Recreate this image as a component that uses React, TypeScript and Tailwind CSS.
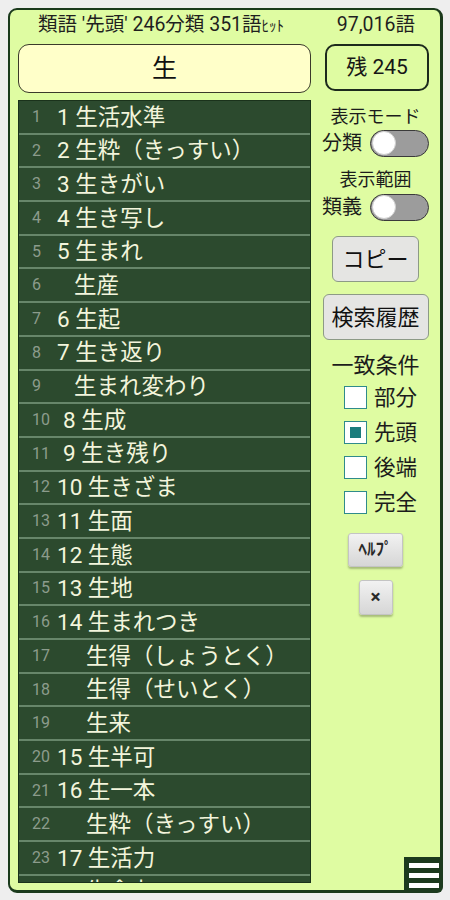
import React from "react";

type Row = { idx: number; text: string; indent: string };

// indent classes are written out so tailwind picks them up
const A = "ml-0";
const B = "ml-[17px]";
const C = "ml-[6px]";
const D = "ml-[29px]";

const rows: Row[] = [
  { idx: 1, text: "1 生活水準", indent: A },
  { idx: 2, text: "2 生粋（きっすい）", indent: A },
  { idx: 3, text: "3 生きがい", indent: A },
  { idx: 4, text: "4 生き写し", indent: A },
  { idx: 5, text: "5 生まれ", indent: A },
  { idx: 6, text: "生産", indent: B },
  { idx: 7, text: "6 生起", indent: A },
  { idx: 8, text: "7 生き返り", indent: A },
  { idx: 9, text: "生まれ変わり", indent: B },
  { idx: 10, text: "8 生成", indent: C },
  { idx: 11, text: "9 生き残り", indent: C },
  { idx: 12, text: "10 生きざま", indent: A },
  { idx: 13, text: "11 生面", indent: A },
  { idx: 14, text: "12 生態", indent: A },
  { idx: 15, text: "13 生地", indent: A },
  { idx: 16, text: "14 生まれつき", indent: A },
  { idx: 17, text: "生得（しょうとく）", indent: D },
  { idx: 18, text: "生得（せいとく）", indent: D },
  { idx: 19, text: "生来", indent: D },
  { idx: 20, text: "15 生半可", indent: A },
  { idx: 21, text: "16 生一本", indent: A },
  { idx: 22, text: "生粋（きっすい）", indent: D },
  { idx: 23, text: "17 生活力", indent: A },
  { idx: 24, text: "生命力", indent: D },
];

const font = "font-['Roboto','Noto_Sans_CJK_JP',sans-serif]";

function Toggle({ label }: { label: string }) {
  return (
    <div className="flex items-center gap-[8px] h-[28px]">
      <span className="text-[20px] leading-none text-[#1c1c1c]">{label}</span>
      <div className="w-[59px] h-[27px] rounded-full bg-[#9c9c9c] border-[1.5px] border-[#3a3a3a] flex items-center px-[1px]">
        <div className="w-[24px] h-[24px] rounded-full bg-white border border-[#cfcfcf]" />
      </div>
    </div>
  );
}

function Check({ label, on }: { label: string; on?: boolean }) {
  return (
    <div className="flex items-center h-[35px] pl-[33px]">
      <div className="w-[23px] h-[23px] border-[1.5px] border-[#2f8b8b] bg-white flex items-center justify-center">
        {on && <div className="w-[11px] h-[11px] bg-[#1a7c7c]" />}
      </div>
      <span className="ml-[7px] text-[21.5px] leading-none text-[#1c1c1c]">{label}</span>
    </div>
  );
}

export default function App() {
  return (
    <div className={`w-[450px] h-[900px] bg-[#eeeeee] pt-[8px] pl-[8px] ${font}`}>
      <div className="relative w-[435px] h-[885px] rounded-[9px] border-2 border-r-[3px] border-b-[3px] border-[#1b3a1c] bg-[#dffca2] flex flex-col">
        {/* header */}
        <div className="h-[30px] flex items-center text-[19.5px] text-[#1f1f1f] leading-none">
          <span className="ml-[28px] whitespace-nowrap">
            類語 '先頭' 246分類 351語<span className="text-[15px]">ﾋｯﾄ</span>
          </span>
          <span className="ml-auto mr-[25px] whitespace-nowrap">97,016語</span>
        </div>

        <div className="flex">
          {/* left column */}
          <div className="w-[293px] ml-[8px] flex flex-col">
            <div className="mt-[4px] h-[49px] rounded-[11px] border-[1.5px] border-[#3a3a2a] bg-[#ffffc9] flex items-center justify-center text-[25px] text-[#111]">
              生
            </div>
            <div className="mt-[7px] h-[783px] overflow-hidden bg-[#2c4a2e] border border-[#1a321b]">
              {rows.map((r) => (
                <div
                  key={r.idx}
                  className="h-[33.7px] border-b-2 border-[#67866a] flex items-center pl-[13px]"
                >
                  <span className="w-[25px] text-[16px] text-[#8c9c8c] leading-none">{r.idx}</span>
                  <span className={`${r.indent} text-[22.5px] text-[#f3f5dc] leading-none whitespace-nowrap`}>
                    {r.text}
                  </span>
                </div>
              ))}
            </div>
          </div>

          {/* right column */}
          <div className="flex-1 flex flex-col">
            <div className="ml-[14px] mt-[4px] w-[104px] h-[47px] rounded-[10px] border-2 border-[#1d2a1d] flex items-center justify-center text-[21px] text-[#161616]">
              残 245
            </div>
            <div className="flex flex-col items-center">
              <div className="mt-[16px] h-[20px] text-[18px] leading-none text-[#1c1c1c] flex items-center">表示モード</div>
              <div className="mt-[2px]"><Toggle label="分類" /></div>
              <div className="mt-[13px] h-[20px] text-[18px] leading-none text-[#1c1c1c] flex items-center">表示範囲</div>
              <div className="mt-[3px]"><Toggle label="類義" /></div>
              <button className="mt-[15px] w-[87px] h-[46px] rounded-[6px] bg-[#e5e5e3] border border-[#8d9a86] text-[22px] text-[#111]">
                コピー
              </button>
              <button className="mt-[12px] w-[106px] h-[46px] rounded-[6px] bg-[#e5e5e3] border border-[#8d9a86] text-[22px] text-[#111]">
                検索履歴
              </button>
              <div className="mt-[14px] h-[24px] text-[22px] leading-none text-[#1c1c1c] flex items-center">一致条件</div>
            </div>
            <div className="mt-[2px] flex flex-col">
              <Check label="部分" />
              <Check label="先頭" on />
              <Check label="後端" />
              <Check label="完全" />
            </div>
            <div className="flex flex-col items-center">
              <button className="mt-[13px] w-[55px] h-[34px] rounded-[3px] bg-gradient-to-b from-[#f2f2f2] to-[#d6d6d6] border border-[#c4c4c4] shadow-[0_2px_2px_rgba(0,0,0,0.25)] text-[17px] text-[#2a2a2a] font-bold">
                ﾍﾙﾌﾟ
              </button>
              <button className="mt-[13px] w-[34px] h-[35px] rounded-[3px] bg-gradient-to-b from-[#f2f2f2] to-[#d6d6d6] border border-[#c4c4c4] shadow-[0_2px_2px_rgba(0,0,0,0.25)] text-[19px] text-[#2a2a2a] font-bold">
                ×
              </button>
            </div>
          </div>
        </div>

        {/* menu button over the corner */}
        <div className="absolute right-[-3px] bottom-[-3px] w-[39px] h-[36px] bg-[#1c3a1d] rounded-br-[6px] flex flex-col items-center justify-center gap-[5px]">
          <div className="w-[30px] h-[5px] bg-white" />
          <div className="w-[30px] h-[5px] bg-white" />
          <div className="w-[30px] h-[5px] bg-white" />
        </div>
      </div>
    </div>
  );
}
